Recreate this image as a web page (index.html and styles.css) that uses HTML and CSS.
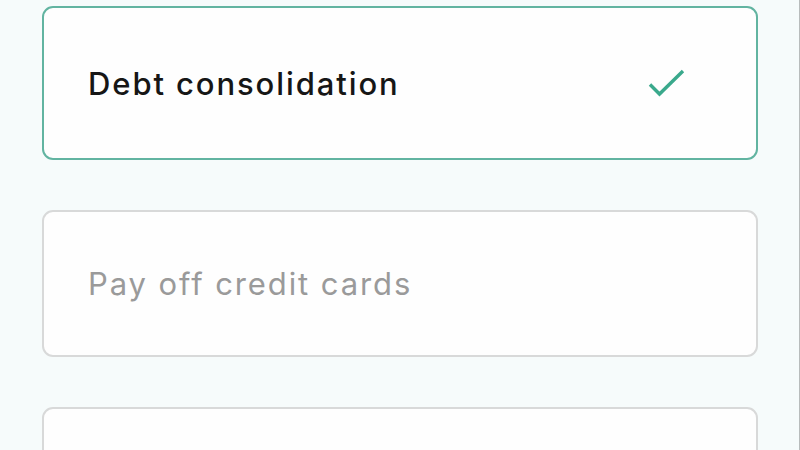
FILE: index.html
```html
<!DOCTYPE html>
<html lang="en">
<head>
<meta charset="utf-8">
<title>Loan purpose</title>
<link rel="stylesheet" href="styles.css">
</head>
<body>
<main class="options">
  <div class="option option--selected">
    <span class="option-label">Debt consolidation</span>
    <svg class="check" width="38" height="30" viewBox="0 0 38 30" aria-hidden="true">
      <path d="M2 15.5 L11.5 25 L35 2" fill="none" stroke="#3aa98c" stroke-width="3.4" stroke-linecap="butt" stroke-linejoin="miter"/>
    </svg>
  </div>
  <div class="option">
    <span class="option-label">Pay off credit cards</span>
  </div>
  <div class="option option--partial">
    <span class="option-label"></span>
  </div>
</main>
</body>
</html>
```
FILE: styles.css
```css
html, body {
  margin: 0;
  padding: 0;
  height: 100%;
}
body {
  background: #f6fbfb;
  font-family: Inter, "Noto Sans", sans-serif;
  overflow: hidden;
  border-right: 1px solid #b8bcbc;
  box-sizing: border-box;
}
.options {
  display: flex;
  flex-direction: column;
  gap: 50px;
  padding: 6px 41px 0 42px;
}
.option {
  display: flex;
  align-items: center;
  justify-content: space-between;
  box-sizing: border-box;
  height: 147px;
  padding: 0 70px 0 44px;
  background: #fefefe;
  border: 2px solid #d8d9d9;
  border-radius: 11px;
}
.option--selected {
  height: 154px;
  border-color: #62b4a1;
}
.option--partial {
  height: 147px;
}
.option-label {
  font-size: 31px;
  font-weight: 400;
  letter-spacing: 1.9px;
  color: #9a9a9a;
}
.option--selected .option-label {
  font-weight: 500;
  color: #161616;
}
.check {
  display: block;
  margin-top: 1px;
}
```
